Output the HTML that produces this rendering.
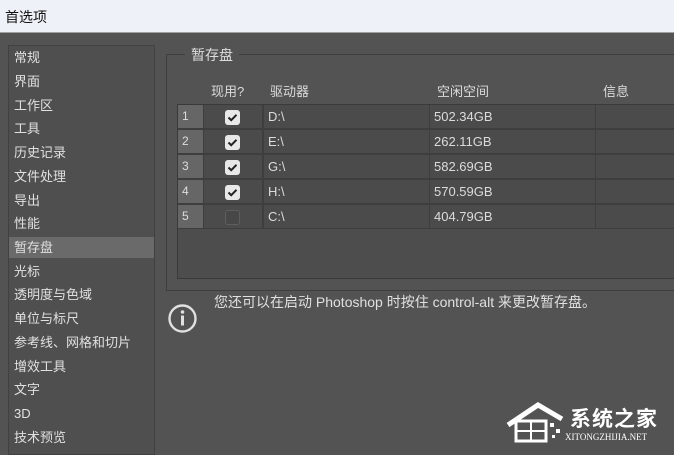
<!DOCTYPE html><html><head><meta charset="utf-8"><style>
*{margin:0;padding:0;box-sizing:border-box}
body{width:674px;height:453px;overflow:hidden;background:#535353;position:relative;font-family:"Liberation Sans","Noto Sans CJK SC",sans-serif;color:#dcdcdc;font-size:13px}
.a{position:absolute;white-space:nowrap}
#title{left:0;top:0;width:674px;height:33px;background:#eef2f8;border-bottom:1px solid #a0a0a0;color:#111;font-size:14px;padding:7px 0 0 5px}
#left{left:8px;top:45px;width:147px;height:410px;background:#4f4f4f;border:1px solid #414141}
.it{position:absolute;left:14px;font-size:13px;color:#e0e0e0;line-height:16px;white-space:nowrap}
#sel{left:9px;top:237px;width:145px;height:21px;background:#6a6a6a}
#grp{left:166px;top:54px;width:520px;height:237px;border:1px solid #3e3e3e}
.cb{position:absolute;left:225px;width:15px;height:15px;border-radius:3px;background:#e8e8e8}
.cb svg{position:absolute;left:2px;top:3px}
.r{position:absolute;height:23px;background:#4b4b4b}
.n{position:absolute;left:178px;width:25px;height:23px;background:#666}
.num{position:absolute;left:182px;font-size:12px;color:#ddd}
</style></head><body>
<div id="title" class="a">首选项</div>
<div id="left" class="a"></div>
<div id="sel" class="a"></div>
<div class="it" style="top:50px">常规</div>
<div class="it" style="top:74px">界面</div>
<div class="it" style="top:98px">工作区</div>
<div class="it" style="top:121px">工具</div>
<div class="it" style="top:145px">历史记录</div>
<div class="it" style="top:169px">文件处理</div>
<div class="it" style="top:193px">导出</div>
<div class="it" style="top:216px">性能</div>
<div class="it" style="top:240px">暂存盘</div>
<div class="it" style="top:264px">光标</div>
<div class="it" style="top:287px">透明度与色域</div>
<div class="it" style="top:311px">单位与标尺</div>
<div class="it" style="top:335px">参考线、网格和切片</div>
<div class="it" style="top:359px">增效工具</div>
<div class="it" style="top:382px">文字</div>
<div class="it" style="top:406px">3D</div>
<div class="it" style="top:430px">技术预览</div>
<div id="grp" class="a"></div>
<div class="a" style="left:185px;top:45px;background:#535353;padding:0 6px;font-size:14px;color:#ddd">暂存盘</div>
<div class="a" style="left:211px;top:81px">现用?</div>
<div class="a" style="left:270px;top:81px">驱动器</div>
<div class="a" style="left:437px;top:81px">空闲空间</div>
<div class="a" style="left:603px;top:81px">信息</div>
<div class="a" style="left:177px;top:104px;width:500px;height:175px;background:#4d4d4d;border:1px solid #3a3a3a"></div>
<div class="a" style="left:178px;top:105px;width:496px;height:124px;background:#3e3e3e"></div>
<div class="n" style="top:105px"></div><div class="r" style="left:204px;top:105px;width:58px"></div><div class="r" style="left:264px;top:105px;width:165px"></div><div class="r" style="left:430px;top:105px;width:165px"></div><div class="r" style="left:596px;top:105px;width:80px"></div>
<div class="n" style="top:130px"></div><div class="r" style="left:204px;top:130px;width:58px"></div><div class="r" style="left:264px;top:130px;width:165px"></div><div class="r" style="left:430px;top:130px;width:165px"></div><div class="r" style="left:596px;top:130px;width:80px"></div>
<div class="n" style="top:155px"></div><div class="r" style="left:204px;top:155px;width:58px"></div><div class="r" style="left:264px;top:155px;width:165px"></div><div class="r" style="left:430px;top:155px;width:165px"></div><div class="r" style="left:596px;top:155px;width:80px"></div>
<div class="n" style="top:180px"></div><div class="r" style="left:204px;top:180px;width:58px"></div><div class="r" style="left:264px;top:180px;width:165px"></div><div class="r" style="left:430px;top:180px;width:165px"></div><div class="r" style="left:596px;top:180px;width:80px"></div>
<div class="n" style="top:205px"></div><div class="r" style="left:204px;top:205px;width:58px"></div><div class="r" style="left:264px;top:205px;width:165px"></div><div class="r" style="left:430px;top:205px;width:165px"></div><div class="r" style="left:596px;top:205px;width:80px"></div>
<div class="num" style="top:109px">1</div>
<div class="num" style="top:134px">2</div>
<div class="num" style="top:159px">3</div>
<div class="num" style="top:184px">4</div>
<div class="num" style="top:209px">5</div>
<div class="cb" style="top:110px"><svg width="11" height="9"><path d="M1.5 4.5L4.2 7.2L9.5 1.8" stroke="#222" stroke-width="2" fill="none"/></svg></div>
<div class="cb" style="top:135px"><svg width="11" height="9"><path d="M1.5 4.5L4.2 7.2L9.5 1.8" stroke="#222" stroke-width="2" fill="none"/></svg></div>
<div class="cb" style="top:160px"><svg width="11" height="9"><path d="M1.5 4.5L4.2 7.2L9.5 1.8" stroke="#222" stroke-width="2" fill="none"/></svg></div>
<div class="cb" style="top:185px"><svg width="11" height="9"><path d="M1.5 4.5L4.2 7.2L9.5 1.8" stroke="#222" stroke-width="2" fill="none"/></svg></div>
<div class="cb" style="top:210px;background:#474747;border:1px solid #5e5e5e"></div>
<div class="a" style="left:268px;top:109px">D:\</div>
<div class="a" style="left:268px;top:134px">E:\</div>
<div class="a" style="left:268px;top:159px">G:\</div>
<div class="a" style="left:268px;top:184px">H:\</div>
<div class="a" style="left:268px;top:209px">C:\</div>
<div class="a" style="left:434px;top:109px">502.34GB</div>
<div class="a" style="left:434px;top:134px">262.11GB</div>
<div class="a" style="left:434px;top:159px">582.69GB</div>
<div class="a" style="left:434px;top:184px">570.59GB</div>
<div class="a" style="left:434px;top:209px">404.79GB</div>
<div class="a" style="left:214px;top:292px;font-size:14px;color:#e0e0e0">您还可以在启动 Photoshop 时按住 control-alt 来更改暂存盘。</div>
<svg class="a" style="left:167px;top:303px" width="32" height="32"><circle cx="15.5" cy="15.5" r="13" stroke="#e0e0e0" stroke-width="2.4" fill="none"/><circle cx="15.5" cy="9" r="1.8" fill="#e0e0e0"/><rect x="14" y="12.5" width="3" height="10" fill="#e0e0e0"/></svg>
<svg class="a" style="left:500px;top:395px" width="70" height="50"><path d="M8 30L38 10L62 24" stroke="#fff" stroke-width="5" fill="none"/><rect x="16" y="26" width="30" height="20" fill="none" stroke="#fff" stroke-width="3"/><path d="M16 36H46M31 26V46" stroke="#fff" stroke-width="2"/><rect x="50" y="28" width="4" height="4" fill="#fff"/><rect x="56" y="34" width="4" height="4" fill="#fff"/><rect x="52" y="40" width="3" height="3" fill="#fff"/></svg>
<div class="a" style="left:570px;top:403px;font-size:21px;color:#fff;font-weight:bold;letter-spacing:1px">系统之家</div>
<div class="a" style="left:565px;top:432px;font-size:9px;color:#fff;font-family:'Liberation Serif',serif">XITONGZHIJIA.NET</div>
</body></html>
